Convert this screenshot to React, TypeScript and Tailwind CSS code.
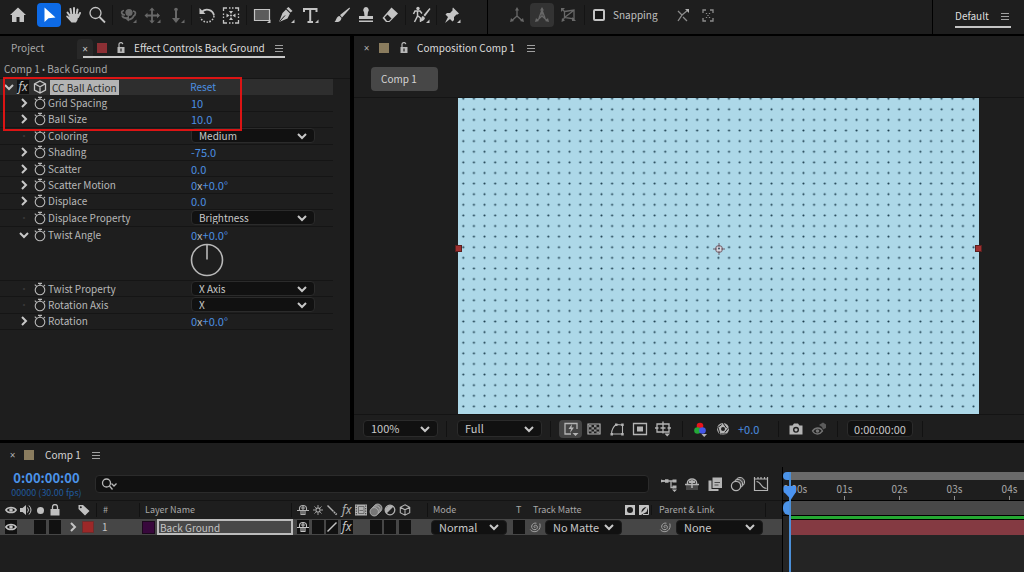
import React, { useState } from "react";
import { clsx } from "clsx";

type Kids = { children?: React.ReactNode };

interface IconProps extends Kids {
  size?: string;
  box?: string;
  className?: string;
}

// Stroke based icon frame shared by every glyph below
function Icon({ size = "size-4", box = "0 0 16 16", className = "", children }: IconProps) {
  return (
    <svg
      viewBox={box}
      className={clsx("shrink-0", size, className)}
      fill="none"
      stroke="currentColor"
      strokeWidth="1.3"
      aria-hidden="true"
    >
      {children}
    </svg>
  );
}

const fill = { fill: "currentColor", stroke: "none" };

const Corner = () => <path d="M20.500 16.500v3.500H17z" {...fill} />;

const Chevron = ({ open = false }: { open?: boolean }) => (
  <Icon size="size-3" box="0 0 12 12">
    <path d={open ? "M2 4l4 4 4-4" : "M4 2l4 4-4 4"} strokeWidth="2" />
  </Icon>
);

const Stopwatch = () => (
  <Icon size="size-3.5" box="0 0 14 14">
    <circle cx="7" cy="8" r="4.8" strokeWidth="1.1" />
    <path d="M5 1.400h4M7 1.400v2M1.800 2.600l1.800 1.800M12 3l-1.200 1.200" strokeWidth="1.100" />
  </Icon>
);

const Menu = () => (
  <Icon size="size-3" box="0 0 12 12" className="text-[#a0a0a0]">
    <path d="M2 3.500h8M2 6.500h8M2 9.500h8" strokeWidth="1" />
  </Icon>
);

const Unlock = () => (
  <Icon size="size-3" box="0 0 12 12" className="text-[#b8b8b8]">
    <path d="M2.500 5h7v6h-7zM5.400 6.500v3h1.200v-3z" fill="currentColor" fillRule="evenodd" stroke="none" />
    <path d="M4 5V2.800a1.900 1.900 0 0 1 3.800-.600" strokeWidth="1.200" />
  </Icon>
);

const Eye = () => (
  <Icon size="size-3" box="0 0 12 12">
    <path d="M.8 6C3 2.600 9 2.600 11.200 6 9 9.400 3 9.400.8 6z" strokeWidth="1.400" />
    <circle cx="6" cy="6" r="1.800" {...fill} />
  </Icon>
);

const Shy = () => (
  <Icon size="size-3" box="0 0 12 12">
    <path d="M2.500 6V4.500a3.500 3 0 0 1 7 0V6M0 6.500h12M6 2v8.500M4 6.500v4h4v-4M4 4h4" strokeWidth="1.100" />
  </Icon>
);

const Fx = () => <span className="font-['Noto_Sans',sans-serif] text-xs leading-3 italic">fx</span>;

const Cube = ({ size = "size-3" }: { size?: string }) => (
  <Icon size={size} box="0 0 14 14">
    <path d="M7 1l5.500 2.800v6.400L7 13l-5.500-2.800V3.800zM1.500 3.800L7 6.800l5.500-3M7 6.800V13" strokeWidth="1.300" />
  </Icon>
);

const Spiral = () => (
  <Icon size="size-3" box="0 0 12 12" className="text-[#a0a0a0]">
    <path
      d="M6.500 6.200c-.6.800-1.700.2-1.500-.8.300-1.300 2.200-1.600 3-.4 1 1.500-.1 3.600-2 3.700C3.700 8.800 2.300 7 2.700 5 3.100 2.800 5.300 1.600 7.500 2.200M10.800 2.500c.8 2.600.2 5.400-1.800 7-2.400 1.800-6 1.600-7.700-1"
      strokeWidth="1"
    />
  </Icon>
);

const Blur = () => (
  <Icon size="size-3.5" box="0 0 12 12">
    <circle cx="7.5" cy="4.5" r="3.600" fill="#777" strokeWidth=".800" />
    <circle cx="6" cy="6" r="3.600" fill="#777" strokeWidth=".800" />
    <circle cx="4.5" cy="7.5" r="3.600" fill="#777" strokeWidth=".800" />
  </Icon>
);

function Swatch({ color }: { color: string }) {
  return <span className={clsx("size-2.5 shrink-0", color)} />;
}

function Sep() {
  return <span className="mx-[3px] h-5 w-px shrink-0 bg-[#141414]" />;
}

interface ToolProps extends Kids {
  label: string;
  active?: boolean;
  dim?: boolean;
  corner?: boolean;
  className?: string;
}

function Tool({ label, active, dim, corner, className, children }: ToolProps) {
  return (
    <button
      aria-label={label}
      className={clsx(
        "flex size-6 shrink-0 items-center justify-center rounded-sm",
        active ? "bg-[#0d6ae6] text-white" : dim ? "text-[#686868]" : "text-[#c4c4c4]",
        className,
      )}
    >
      <Icon size="size-6" box="0 0 24 24">
        {children}
        {corner && <Corner />}
      </Icon>
    </button>
  );
}

interface DropdownProps {
  label: string;
  value: string;
  className?: string;
}

function Dropdown({ label, value, className }: DropdownProps) {
  return (
    <span className={clsx("relative flex items-center rounded-sm border bg-[#111] text-[#c8c8c8]", className)}>
      <select
        aria-label={label}
        defaultValue={value}
        className="h-full w-full appearance-none bg-transparent pl-[7px] leading-[13px] outline-none"
      >
        <option>{value}</option>
      </select>
      <span className="pointer-events-none absolute right-1.5">
        <Chevron open />
      </span>
    </span>
  );
}

function Toolbar() {
  const [snapping, setSnapping] = useState(false);
  return (
    <header className="flex h-[34px] bg-[#1e1e1e]">
      <div className="flex w-[487px] shrink-0 items-center pb-1 pl-1.5">
        <Tool label="Home">
          <path d="M12 4.500L4 12h2v7h4.500v-5h3v5H18v-7h2z" {...fill} />
        </Tool>
        <Tool label="Selection" active className="ml-[7px]">
          <path d="M7.500 4.500v14.500l4-3.800 7-.7z" {...fill} />
        </Tool>
        <Tool label="Hand">
          <path d="M9 13L6.500 9.500M10.500 12L9.500 6M13 12V5M15.300 12.500l1.200-6M17 14l2-4" strokeWidth="2" strokeLinecap="round" />
          <path d="M8.500 11h9l-1 6-1.500 2.500h-4.500L5.500 14q-1-1.500.5-1.500l2.500 1.500z" {...fill} />
        </Tool>
        <Tool label="Zoom">
          <circle cx="10.5" cy="10" r="5.5" />
          <path d="M14.500 14l5.500 5.500" strokeWidth="1.800" />
        </Tool>
        <Sep />
        <Tool label="Orbit camera" dim corner>
          <circle cx="13" cy="9.5" r="3.6" {...fill} />
          <path d="M9 12c-4-.5-4.500-4-1-4.500M17 8c3.500.5 3 4 0 5.500M6 12.500c1 2.500 3.500 3 6 2.500M17.500 13c-.5 2.500-3 3.500-6 4" strokeWidth="1.700" />
          <path d="M13 12.500v6L9 15.500z" {...fill} />
        </Tool>
        <Tool label="Pan camera" dim corner>
          <path d="M12 6v13M6 12.500h13" strokeWidth="1.800" />
          <path d="M12 4.500l2.800 3H9.200zM12 20.500l2.800-3H9.200zM4.500 12.500l3-2.800v5.600zM20 12.500l-3-2.800v5.600z" {...fill} />
        </Tool>
        <Tool label="Dolly camera" dim corner>
          <path d="M12 7v9" strokeWidth="2" />
          <circle cx="12" cy="6.5" r="1.800" {...fill} />
          <path d="M12 20l-4-5h8z" {...fill} />
        </Tool>
        <Sep />
        <Tool label="Rotation">
          <path d="M6.500 9.500A7 7 0 0 1 19 12.500" strokeWidth="1.700" />
          <path d="M19 13a7 7 0 0 1-13.500 1.500" strokeDasharray="1.500 1.500" strokeWidth="1.500" />
          <path d="M4.500 5v6h6z" {...fill} />
        </Tool>
        <Tool label="Anchor point">
          <path d="M4.500 8V5H8M16 5h3.500v3M19.500 17v3H16M8 20H4.500v-3M10 5h1.500M13 5h1.500M10 20h1.500M13 20h1.500M4.500 10.500V12M4.500 13.500V15M19.500 10.500V12M19.500 13.500V15" />
          <path d="M12 11l2-3h-4zM12 14l2 3h-4zM10.500 12.500l-3-2v4zM13.500 12.500l3-2v4z" {...fill} />
          <circle cx="12" cy="12.5" r="1" {...fill} />
        </Tool>
        <Sep />
        <Tool label="Rectangle" corner>
          <path d="M4.500 6.500h15v11h-15z" fill="#5c5c5c" strokeWidth="1.200" />
        </Tool>
        <Tool label="Pen" corner>
          <path d="M14.500 4l4 4-2 1.500-4-4zM12 6.500l4 4-2.500 5L5 19l3.500-9z" {...fill} />
          <path d="M5.500 18.500l5.500-6" stroke="#1e1e1e" strokeWidth="1" />
        </Tool>
        <Tool label="Text" corner>
          <path d="M6 9V6h12.500v3M12.200 6v13M9.500 19h5.500" strokeWidth="2" />
        </Tool>
        <Tool label="Brush" className="ml-2">
          <path d="M19.500 4.500L10 12l2 2.500 8-9zM9.500 13l2 2c-.5 3.500-3.500 4.500-7 4 2-1.500 1.500-5.500 5-6z" {...fill} />
        </Tool>
        <Tool label="Clone stamp">
          <path d="M12 4a3 3 0 0 1 2 5l-.5 4H19v3H5v-3h5.500L10 9a3 3 0 0 1 2-5zM5 17.500h14V19H5z" {...fill} />
        </Tool>
        <Tool label="Eraser">
          <path d="M13.500 4.500l6.500 6-8.500 8.500H8L4.500 15z" {...fill} />
          <path d="M6.500 14.500l3-3 4 4-2.500 2.500H9z" fill="#1e1e1e" stroke="none" />
        </Tool>
        <Sep />
        <Tool label="Roto brush" corner>
          <circle cx="9" cy="5.5" r="1.700" {...fill} />
          <path d="M4.500 11l1.500-3h5l2 2.500M8.500 8v5l-3 6M9 13l2.500 2v4" strokeWidth="1.500" />
          <path d="M20.500 5l-6 7 1.500 1.500 5.500-7.500zM14 13l2 2c-.5 2.500-2.500 3.500-5 3 1.500-1 1-4.500 3-5z" {...fill} />
        </Tool>
        <Sep />
        <Tool label="Puppet pin" corner>
          <path d="M13 4.500l6 6-1.500 1h-1L14 14v3l-1.500 1.500-7-7L7 10h3l2.500-2.500v-2zM8 14l2 2-5 4z" {...fill} />
        </Tool>
      </div>
      <div className="flex flex-1 items-center gap-px border-l border-black pb-1 pl-[17px] text-[10px]">
        <Tool label="Local axis" dim>
          <path d="M12 6v7l-5 4.500M12 13l5 4.500" />
          <path d="M12 4l2 3.500h-4zM5 19l1-4 3 3zM19 19l-1-4-3 3z" {...fill} />
        </Tool>
        <Tool label="World axis" dim className="bg-[#333]">
          <path d="M12 6v7l-5 4.500M12 13l5 4.500M9 15l3-8 3 8" />
          <path d="M12 4l2 3.500h-4zM5 19l1-4 3 3zM19 19l-1-4-3 3z" {...fill} />
        </Tool>
        <Tool label="View axis" dim className="ml-px">
          <path d="M8.500 8.500L18 7v9l-9.500-1.500zM8.500 14.500L17 8M6.500 6.500l2 2M8.500 14.500L7 17" />
          <path d="M5 5h4L5 9zM5.500 19l.5-4 3 2.500zM16 14l4 4h-4z" {...fill} />
        </Tool>
        <Sep />
        <label className="ml-1 flex items-center gap-2 text-[#c0c0c0]">
          <input
            type="checkbox"
            checked={snapping}
            onChange={() => setSnapping(!snapping)}
            className="size-3 appearance-none rounded-xs border-2 border-[#c4c4c4] bg-[#161616] checked:bg-[#4b93e8]"
          />
          Snapping
        </label>
        <Tool label="Snap to edges" dim className="ml-3">
          <path d="M7 8l4 4-4 6M11 12l6-5M12 14l4 4" stroke="#8c8c8c" />
          <path d="M18 6v4l-4-4z" fill="#b0b0b0" stroke="none" />
        </Tool>
        <Tool label="Snap to features" dim>
          <path
            d="M7 10V7h3M14 7h3v3M17 15v3h-3M10 18H7v-3M10.500 10v1M13.500 10v1M10.500 14v1M13.500 14v1M12 12v1"
            stroke="#8c8c8c"
          />
        </Tool>
      </div>
      <div className="flex w-[92px] shrink-0 border-l border-black pl-[22px] text-[10px] text-[#dedede]">
        <button className="flex h-7 w-14 items-center justify-between self-start border-b-2 border-[#c4c4c4] pt-1.5">
          Default
          <Menu />
        </button>
      </div>
    </header>
  );
}

type Param = {
  name: string;
  value?: string;
  angle?: boolean;
  select?: string;
  open?: boolean;
};

const params: Param[] = [
  { name: "Grid Spacing", value: "10" },
  { name: "Ball Size", value: "10.0" },
  { name: "Coloring", select: "Medium" },
  { name: "Shading", value: "-75.0" },
  { name: "Scatter", value: "0.0" },
  { name: "Scatter Motion", angle: true },
  { name: "Displace", value: "0.0" },
  { name: "Displace Property", select: "Brightness" },
  { name: "Twist Angle", angle: true, open: true },
];

const twistParams: Param[] = [
  { name: "Twist Property", select: "X Axis" },
  { name: "Rotation Axis", select: "X" },
  { name: "Rotation", angle: true },
];

function ParamRow({ name, value, angle, select, open }: Param) {
  return (
    <div className={clsx("flex items-center border-[#151515] text-[#b8b8b8]", !open && "border-b")}>
      <div className="flex w-[191px] shrink-0 items-center pl-[18px]">
        {select ? (
          <span className="flex w-3 justify-center text-[#383838]">·</span>
        ) : (
          <button aria-label={`Expand ${name}`} className="text-[#c8c8c8]">
            <Chevron open={open} />
          </button>
        )}
        <button aria-label={`Animate ${name}`} className="ml-[3px]">
          <Stopwatch />
        </button>
        <span className="ml-px">{name}</span>
      </div>
      {select && <Dropdown label={name} value={select} className="h-[15px] w-[124px] border-[#2b2b2b]" />}
      {value && <button className="text-[11px] leading-3 text-[#4b8fe0]">{value}</button>}
      {angle && (
        <button className="text-[11px] leading-3 text-[#4b8fe0]">
          0<span className="text-[#b4b4b4]">x</span>+0.0°
        </button>
      )}
    </div>
  );
}

function EffectControls() {
  return (
    <section className="w-[350px] shrink-0 bg-[#1e1e1e] text-[10px]">
      <div className="flex h-6 items-center pl-[11px]">
        <button className="w-[66px] text-left text-[#a8a8a8]">Project</button>
        <div className="flex h-[22px] items-center self-start pt-1">
          <button
            aria-label="Close tab"
            className="h-5 w-4 rounded-t-sm bg-[#282828] font-['Noto_Sans',sans-serif] text-[#c4c4c4]"
          >
            ×
          </button>
          <div className="-ml-2.5 flex h-full items-center border-b-2 border-[#c8c8c8] pl-3.5 text-[#dcdcdc]">
            <Swatch color="bg-[#8c2f34]" />
            <span className="ml-2 flex items-center">
              <Unlock />
            </span>
            <span className="ml-[7px]">Effect Controls Back Ground</span>
            <button aria-label="Panel menu" className="ml-2">
              <Menu />
            </button>
          </div>
        </div>
      </div>
      <p className="h-[19px] border-b border-[#151515] pt-0.5 pl-1 text-[#a8a8a8]">
        Comp 1 <span className="font-['Noto_Sans',sans-serif] text-[8px]">•</span> Back Ground
      </p>
      <div className="relative mr-[17px]">
        <div className="grid h-[164px] auto-rows-fr">
          <div className="flex items-center bg-[#2e2e2e] text-[#c4c4c4]">
            <button aria-label="Collapse effect" className="ml-[3px]">
              <Chevron open />
            </button>
            <button
              aria-label="Toggle effect"
              className="ml-0.5 flex h-3.5 w-3 items-center justify-center bg-[#111]"
            >
              <Fx />
            </button>
            <span className="ml-1 flex">
              <Cube size="size-3.5" />
            </span>
            <span className="ml-[3px] bg-[#b4b4b4] pr-0.5 pl-0.5 leading-[15px] text-[#2a2a2a]">CC Ball Action</span>
            <span className="flex-1" />
            <button className="mr-[117px] text-[#4b8fe0]">Reset</button>
          </div>
          {params.map((p) => (
            <ParamRow key={p.name} {...p} />
          ))}
        </div>
        <div className="h-[38px] border-b border-[#151515] pl-[190px]">
          <Icon size="size-[34px]" box="0 0 34 34" className="text-[#b8b8b8]">
            <circle cx="17" cy="17" r="15.5" strokeWidth="1.600" />
            <path d="M17 2v14.500" strokeWidth="1.600" />
          </Icon>
        </div>
        <div className="grid h-[49px] auto-rows-fr">
          {twistParams.map((p) => (
            <ParamRow key={p.name} {...p} />
          ))}
        </div>
        {/* highlight around the first two params */}
        <div className="pointer-events-none absolute -top-0.5 left-[3px] h-[54px] w-[239px] border-2 border-[#dc1414]" />
      </div>
    </section>
  );
}

function ViewerButton({ label, className, children }: { label: string; className?: string } & Kids) {
  return (
    <button
      aria-label={label}
      className={clsx("flex h-[18px] w-[23px] shrink-0 items-center justify-center text-[#b4b4b4]", className)}
    >
      <Icon>{children}</Icon>
    </button>
  );
}

function Composition() {
  return (
    <section className="flex min-w-0 flex-1 flex-col bg-[#1e1e1e] text-[10px]">
      <div className="flex h-6 items-center pl-2 text-[#dcdcdc]">
        <button aria-label="Close tab" className="mr-2 w-[9px] font-['Noto_Sans',sans-serif] text-[#b0b0b0]">
          ×
        </button>
        <Swatch color="bg-[#8a7c5e]" />
        <span className="ml-[9px] flex">
          <Unlock />
        </span>
        <span className="ml-[7px]">Composition Comp 1</span>
        <button aria-label="Panel menu" className="ml-2.5">
          <Menu />
        </button>
      </div>
      <div className="h-[38px] border-b border-[#141414] pt-[7px] pl-[17px]">
        <button className="h-6 w-[67px] rounded-sm bg-[#474747] pl-2.5 text-left text-[#d4d4d4]">Comp 1</button>
      </div>
      <div className="relative mr-[45px] ml-[104px] h-[316px] bg-[#add8e8]">
        <svg className="block size-full" aria-hidden="true">
          <defs>
            <pattern id="balls" x="0" y="6" width="10.63" height="10.61" patternUnits="userSpaceOnUse">
              <circle cx="5.3" cy="5.3" r="1.05" fill="#1a3c4c" />
            </pattern>
          </defs>
          <rect width="100%" height="100%" fill="url(#balls)" />
        </svg>
        <span className="absolute top-[147px] -left-[3px] size-[7px] border border-[#5c2020] bg-[#a03030]" />
        <span className="absolute top-[147px] -right-[3px] size-[7px] border border-[#5c2020] bg-[#a03030]" />
        <span className="absolute inset-x-0 top-36 flex justify-center text-[#6c5c68]">
          <Icon size="size-3.5" box="0 0 14 14">
            <circle cx="7" cy="7" r="3.5" strokeWidth="1" fill="#d8d4dc" />
            <path d="M7 1v4M7 9v4M1 7h4M9 7h4" strokeWidth="1" />
            <circle cx="7" cy="6.500" r=".900" fill="#1e4254" stroke="none" />
          </Icon>
        </span>
      </div>
      <footer className="flex h-[26px] items-center border-t border-[#141414] pt-0.5 pl-[9px] text-[11px]">
        <Dropdown label="Magnification" value="100%" className="h-[17px] w-[75px] border-[#2b2b2b]" />
        <span className="mx-2 h-4 w-px bg-[#121212]" />
        <Dropdown label="Resolution" value="Full" className="ml-0.5 h-[17px] w-[85px] border-[#2b2b2b]" />
        <span className="mx-2 h-4 w-px bg-[#121212]" />
        <ViewerButton label="Fast previews" className="w-5 rounded-sm bg-[#444]">
          <path d="M8 13H2V2.500h12V8" />
          <path d="M9 3L5.500 8H8l-1 4 4-5.500H8.500zM9.500 12h6L12.500 15z" {...fill} />
        </ViewerButton>
        <ViewerButton label="Transparency grid">
          <path d="M2 3h12v10H2z" strokeWidth="1.200" />
          <path
            d="M3 4h2.500v2.200H3zM8 4h2.500v2.200H8zM5.500 6.200H8v2.200H5.500zM10.500 6.200H13v2.200h-2.500zM3 8.400h2.500v2.200H3zM8 8.400h2.500v2.200H8zM5.500 10.600H8v2H5.500zM10.500 10.600H13v2h-2.500z"
            fill="#8c8c8c"
            stroke="none"
          />
        </ViewerButton>
        <ViewerButton label="Mask visibility">
          <path d="M2.500 13c0-4 1-6.500 4.500-9.500l6.500.5v9z" strokeWidth="1.100" />
          <path d="M1.500 12h2.500v2.500H1.500zM6 2.500h2.500V5H6zM12.200 2.500h2.500V5h-2.500zM12.200 12h2.500v2.500h-2.500z" {...fill} />
        </ViewerButton>
        <ViewerButton label="Region of interest">
          <path d="M1.500 2.500h13v11h-13z" />
          <path d="M5 5.500h6v5H5z" {...fill} />
        </ViewerButton>
        <ViewerButton label="Grid and guides">
          <path d="M2 3h12v8H2zM8 .5v12M0 7h3.500M12.500 7H16M5.500 7h5" />
          <path d="M9.500 12.500h5.500L12.200 15.500z" {...fill} />
        </ViewerButton>
        <span className="mr-[5px] ml-2 h-4 w-px bg-[#121212]" />
        <ViewerButton label="Channels">
          <circle cx="8" cy="5" r="3.3" fill="#e8141c" stroke="none" />
          <circle cx="5.500" cy="9.500" r="3.3" fill="#24a838" stroke="none" />
          <circle cx="10.500" cy="9.500" r="3.3" fill="#4456e8" stroke="none" />
          <path d="M9.500 13h5.500L12.200 16z" {...fill} />
        </ViewerButton>
        <ViewerButton label="Reset exposure">
          <circle cx="8" cy="8" r="6" {...fill} />
          <path d="M8 2l3.500 5M13.800 6.500l-4 5M12 13H6M5 13L3.200 7M2.200 7l4.500-3.500" stroke="#1e1e1e" strokeWidth="1" />
          <circle cx="8" cy="8" r="2" fill="#1e1e1e" stroke="none" />
        </ViewerButton>
        <button className="ml-1 w-10 text-left text-[#4b8fe0]">+0.0</button>
        <span className="mr-[5px] h-4 w-px bg-[#121212]" />
        <ViewerButton label="Take snapshot">
          <path
            d="M1.500 4.500h3l1.500-2h4l1.500 2h3v9h-13zM8 5.800a3 3 0 1 0 0 6 3 3 0 0 0 0-6z"
            fill="currentColor"
            fillRule="evenodd"
            stroke="none"
          />
          <circle cx="8" cy="8.8" r="1.6" {...fill} />
        </ViewerButton>
        <ViewerButton label="Show snapshot">
          <g stroke="#747474">
            <path d="M1.500 10c3-4 8-4 10 0-3 4-7.500 4-10 0z" />
            <circle cx="6.5" cy="10" r="1.800" fill="#747474" stroke="none" />
            <path d="M8 4l4-2.500 3 2V7l-3 1.500-1-2.500z" fill="#5c5c5c" stroke="none" />
          </g>
        </ViewerButton>
        <span className="mr-[9px] ml-[7px] h-4 w-px bg-[#121212]" />
        <button className="h-[17px] w-[66px] rounded-sm border border-[#2b2b2b] bg-[#111] text-[#c8c8c8]">
          0:00:00:00
        </button>
        <span className="ml-[9px] h-4 w-px bg-[#121212]" />
      </footer>
    </section>
  );
}

function Box({ children, className }: { className?: string } & Kids) {
  return (
    <span className={clsx("mx-auto flex h-3.5 w-3 items-center justify-center bg-[#111]", className)}>{children}</span>
  );
}

const columns = [
  "w-[62px]",
  "w-[34px]",
  "w-[43px]",
  "w-[157px]",
  "w-[131px]",
  "w-[82px]",
  "w-5",
  "w-[127px]",
  "w-[126px]",
];

function LayerTable() {
  const [name, setName] = useState("Back Ground");
  return (
    <table className="w-full table-fixed border-separate border-spacing-0 text-left">
      <colgroup>
        {columns.map((w) => (
          <col key={w} className={w} />
        ))}
      </colgroup>
      <thead className="text-[9px] text-[#a8a8a8]">
        <tr className="h-[18px] *:p-0 *:font-normal">
          <th>
            <div className="ml-1 grid w-[58px] grid-cols-4 items-center justify-items-center text-[#c0c0c0]">
              <Eye />
              <Icon size="size-3" box="0 0 12 12">
                <path d="M0 4h2.500L6 1v10L2.500 8H0z" {...fill} />
                <path d="M7.500 3.500q2 2.500 0 5M9 1.500q4 4.500 0 9" strokeWidth="1" />
              </Icon>
              <span className="size-[7px] rounded-full bg-current" />
              <Icon size="size-3" box="0 0 12 12">
                <path d="M1.500 5h9v6.500h-9z" {...fill} />
                <path d="M3.500 5V3a2.500 2.500 0 0 1 5 0v2" />
              </Icon>
            </div>
          </th>
          <th>
            <div className="flex justify-end pr-1.5 text-[#c0c0c0]">
              <Icon size="size-3" box="0 0 12 12">
                <path
                  d="M.5 1H5l6.500 6L7 11.500.5 5zM2.800 2.200a1 1 0 1 0 0 2 1 1 0 0 0 0-2z"
                  fill="currentColor"
                  fillRule="evenodd"
                  stroke="none"
                />
              </Icon>
            </div>
          </th>
          <th>
            <span className="block border-l border-[#121212] pl-1.5">#</span>
          </th>
          <th>
            <span className="mr-1 block border-x border-[#121212] pl-[5px]">Layer Name</span>
          </th>
          <th>
            <div className="grid w-[116px] grid-cols-8 items-center justify-items-center text-[#b0b0b0]">
              <Shy />
              <Icon size="size-3" box="0 0 12 12">
                <circle cx="6" cy="6" r="2.1" strokeWidth="1.100" />
                <path
                  d="M6 1v2M6 9v2M1 6h2M9 6h2M2.500 2.500l1.300 1.300M8.200 8.200l1.300 1.300M9.500 2.500L8.200 3.800M3.800 8.200L2.500 9.500"
                  strokeWidth=".9"
                />
              </Icon>
              <Icon size="size-3" box="0 0 12 12">
                <path d="M1.500 1.500l6 6" strokeWidth="1.400" />
                <path d="M8 8l3 3" strokeDasharray="1.500 .800" strokeWidth="1.800" />
              </Icon>
              <Fx />
              <Icon size="size-3" box="0 0 12 12">
                <path d="M0 .5h12v11H0z" {...fill} />
                <path d="M1.300 1.500v9M10.700 1.500v9" stroke="#3a3a3a" strokeDasharray="1.300 1.200" strokeWidth="1" />
                <path d="M3.500 2.500h5.500v7H3.500z" stroke="#5c5c5c" strokeWidth=".8" />
                <path d="M4.500 6.500h3.500" stroke="#5c5c5c" strokeWidth=".8" />
              </Icon>
              <Blur />
              <Icon size="size-3" box="0 0 12 12">
                <circle cx="6" cy="6" r="4.800" />
                <path d="M9.500 2.500A5 5 0 0 0 2.500 9.500z" {...fill} />
              </Icon>
              <Cube />
            </div>
          </th>
          <th>
            <span className="block border-l border-[#121212] pl-[5px]">Mode</span>
          </th>
          <th className="pl-[7px]!">T</th>
          <th>
            <div className="flex items-center pl-1">
              Track Matte
              <span className="flex-1" />
              <span className="mr-1 flex gap-1 border-r border-[#121212] pr-0.5 text-[#c4c4c4]">
                <Icon size="size-2.5" box="0 0 10 10">
                  <path
                    d="M0 0h10v10H0zM5 2a3 3 0 1 0 0 6 3 3 0 0 0 0-6z"
                    fill="currentColor"
                    fillRule="evenodd"
                    stroke="none"
                  />
                </Icon>
                <Icon size="size-2.5" box="0 0 10 10">
                  <path
                    d="M0 0h10L7.500 7 2 10H0zM7.500 2a5 5 0 0 0-5 5.500z"
                    fill="currentColor"
                    fillRule="evenodd"
                    stroke="none"
                  />
                  <path d="M9.500 1v8.500H4" strokeWidth="1" />
                </Icon>
              </span>
            </div>
          </th>
          <th>
            <span className="mr-4 block border-r border-[#121212] pl-[3px]">Parent &amp; Link</span>
          </th>
        </tr>
      </thead>
      <tbody>
        <tr className="h-4 bg-[#464646] text-[#c4c4c4] *:p-0">
          <td>
            <div className="ml-1 grid w-[58px] grid-cols-4">
              <Box>
                <Eye />
              </Box>
              <span />
              <Box />
              <Box />
            </div>
          </td>
          <td>
            <div className="flex items-center gap-[3px] pl-[5px]">
              <button aria-label="Expand layer">
                <Chevron />
              </button>
              <span className="size-3 border border-[#6c2c2c] bg-[#9c2828]" />
            </div>
          </td>
          <td className="pl-1.5! text-[10px]">1</td>
          <td>
            <div className="flex items-center pl-[3px]">
              <span className="size-[13px] shrink-0 border border-[#1c081c] bg-[#38083c]" />
              <input
                aria-label="Layer name"
                value={name}
                onChange={(e) => setName(e.target.value)}
                className="mr-[3px] ml-0.5 h-4 w-full min-w-0 border-2 border-[#bcbcbc] bg-[#484848] pl-px text-[10px] leading-3 outline-none"
              />
            </div>
          </td>
          <td>
            <div className="grid w-[116px] grid-cols-8">
              <Box>
                <Shy />
              </Box>
              <Box />
              <Box>
                <Icon size="size-3" box="0 0 12 12">
                  <path d="M1.500 10.500l9-9" strokeWidth="1.400" />
                </Icon>
              </Box>
              <Box>
                <Fx />
              </Box>
              <span />
              <Box />
              <Box />
              <Box />
            </div>
          </td>
          <td className="pl-1!">
            <Dropdown label="Mode" value="Normal" className="h-[15px] w-[76px] border-[#1c1c1c]" />
          </td>
          <td>
            <Box />
          </td>
          <td>
            <div className="flex items-center gap-1">
              <Spiral />
              <Dropdown label="Track matte" value="No Matte" className="h-[15px] w-[77px] border-[#1c1c1c]" />
            </div>
          </td>
          <td>
            <div className="flex items-center gap-[5px] pl-[3px]">
              <Spiral />
              <Dropdown label="Parent" value="None" className="h-[15px] w-[87px] border-[#1c1c1c]" />
            </div>
          </td>
        </tr>
      </tbody>
    </table>
  );
}

const ticks = ["01s", "02s", "03s", "04s"];

function TimeRuler() {
  return (
    <div className="relative flex min-w-0 flex-1 flex-col overflow-hidden border-l border-black bg-[#242424]">
      <div className="h-[5px] bg-[#1e1e1e]" />
      <div className="flex h-2 bg-[#1e1e1e]">
        <span className="w-[7px] rounded-l-full bg-[#4b93e8]" />
        <span className="flex-1 bg-[#6a6a6a]" />
      </div>
      <div className="flex h-[21px] border-b border-black bg-[#1e1e1e] text-[10px] text-[#a8a8a8]">
        <span className="w-[34px] shrink-0 leading-[18px]">0:00s</span>
        {ticks.map((t) => (
          <span key={t} className="flex w-[55px] shrink-0 flex-col items-center justify-between leading-[18px]">
            <span className="h-4">{t}</span>
            <span className="h-1 w-px bg-[#8c8c8c]" />
          </span>
        ))}
      </div>
      <div className="flex h-[15px] border-b border-black bg-[#1e1e1e]">
        <span className="w-1.5 rounded-l-full bg-[#4b93e8]" />
        <span className="ml-px flex-1 bg-[#484848]" />
      </div>
      <div className="ml-[7px] h-1 border-b border-black bg-[#25a833]" />
      <div className="ml-[7px] h-[15px] bg-[#843a42]" />
      {/* playhead */}
      <div className="absolute top-[5px] bottom-0 left-1.5 w-0.5 bg-[#4b8fd8]" />
      <svg viewBox="0 0 12 14" className="absolute top-[19px] left-px h-3.5 w-3" aria-hidden="true">
        <path d="M0 0h12v6l-5 7.500L0 6z" fill="#4b93f0" />
      </svg>
    </div>
  );
}

function Timeline() {
  return (
    <section className="flex flex-1 flex-col bg-[#1e1e1e]">
      <div className="flex h-6 items-center pl-2 text-[10px] text-[#d4d4d4]">
        <button aria-label="Close tab" className="mr-[7px] w-[9px] font-['Noto_Sans',sans-serif] text-[#b0b0b0]">
          ×
        </button>
        <Swatch color="bg-[#8a7c5e]" />
        <span className="ml-[11px]">Comp 1</span>
        <button aria-label="Panel menu" className="ml-[9px]">
          <Menu />
        </button>
      </div>
      <div className="flex flex-1">
        <div className="w-[782px] shrink-0">
          <div className="flex h-[34px] items-start border-b border-[#141414]">
            <button className="w-[93px] shrink-0 pt-0.5 text-center text-[9px] leading-[14px] text-[#1f5a9e]">
              <span className="block text-[13px] leading-[17px] font-bold text-[#4b93e8]">0:00:00:00</span>
              00000 (30.00 fps)
            </button>
            <label className="mt-2 ml-0.5 flex h-[18px] flex-1 items-center rounded-sm border border-[#2b2b2b] bg-[#111] pl-1 text-[#b8b8b8]">
              <Icon box="0 0 18 16" size="h-4 w-[18px]">
                <circle cx="6.5" cy="7" r="4" />
                <path d="M9.500 10l3 3.500M11.500 7.500l2.500 2.500 2.500-2.500" />
              </Icon>
              <input aria-label="Search layers" className="min-w-0 flex-1 bg-transparent outline-none" />
            </label>
            <div className="mt-2 flex w-[133px] justify-start pl-2 text-[#b0b0b0]">
              <ViewerButton label="Mini flowchart">
                <path d="M1 5h9v6.500h3M10 5h4" />
                <path
                  d="M0 3.500l5 1.500-5 1.500zM4 3.200h3.500v3.600H4zM11.500 3.500h4v3h-4zM11.500 9.500h4v3h-4zM11 13.500h5L13.500 16z"
                  {...fill}
                />
              </ViewerButton>
              <ViewerButton label="Hide shy layers">
                <path d="M2 9h12v5H2z" fill="#484848" stroke="none" />
                <path d="M3.500 8V6.500a4.500 3.500 0 0 1 9 0V8M1 8.500h14M8 4v8" strokeWidth="1.500" />
                <path d="M5 4.500h6V7H5z" {...fill} />
              </ViewerButton>
              <ViewerButton label="Frame blending">
                <path d="M5.500 1.500H15V12H5.500zM1.500 4.500h3v8.500h7v2h-10z" {...fill} />
                <path d="M7.500 6.500h5.500M7.500 9h4" stroke="#4a4a4a" strokeWidth="1" />
              </ViewerButton>
              <ViewerButton label="Motion blur">
                <circle cx="10" cy="6" r="4.6" fill="#4a4a4a" strokeWidth="1" />
                <circle cx="8" cy="8" r="4.6" fill="#4a4a4a" strokeWidth="1" />
                <circle cx="6" cy="10" r="4.6" fill="#1e1e1e" strokeWidth="1.200" />
              </ViewerButton>
              <ViewerButton label="Graph editor">
                <path d="M1.500 3h13v11.500h-13z" strokeWidth="1.200" />
                <path d="M1.500 1v2M5 1v2M8 1v2M11.500 1v2M14.500 1v2M3.500 5.500c5 0 4 7 10 7" strokeWidth="1.200" />
              </ViewerButton>
            </div>
          </div>
          <LayerTable />
        </div>
        <TimeRuler />
      </div>
    </section>
  );
}

export default function App() {
  return (
    <main className="flex min-h-screen flex-col bg-black font-['Noto_Sans_CJK_SC','Noto_Sans',sans-serif] text-[11px] leading-[14px] whitespace-nowrap">
      <Toolbar />
      <div className="mt-0.5 mb-[3px] flex gap-1">
        <EffectControls />
        <Composition />
      </div>
      <Timeline />
    </main>
  );
}
